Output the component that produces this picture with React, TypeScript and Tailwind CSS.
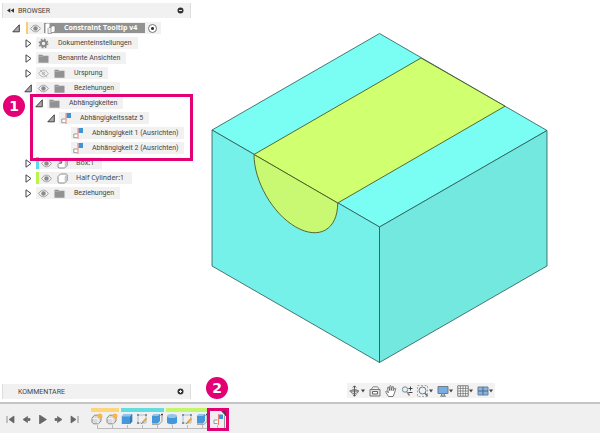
import type { ReactNode } from "react";
import clsx from "clsx";

type TreeRow = {
  label: string;
  indent: string;
  arrow?: "open" | "closed";
  icons: ReactNode;
  wide?: boolean;
  pill?: string;
};

const Eye = ({ off = false }: { off?: boolean }) => (
  <svg className="h-[9px] w-[11px] shrink-0" viewBox="0 0 11 9" fill="none">
    <path
      d="M.6 4.500C2.400 1.900 4 1.200 5.500 1.200S8.600 1.900 10.400 4.500C8.600 7.100 7 7.800 5.500 7.800S2.400 7.100.6 4.500Z"
      stroke={off ? "#b5b5b5" : "#a0a0a0"}
    />
    <circle
      cx="5.500"
      cy="4.500"
      r={off ? 1.3 : 2.2}
      fill={off ? "none" : "#8a8a8a"}
      stroke={off ? "#b5b5b5" : "none"}
    />
    {off && <path d="M2 .8 9 8.200" stroke="#b5b5b5" />}
  </svg>
);

const Folder = () => (
  <svg className="h-[9px] w-[11px] shrink-0" viewBox="0 0 11 9">
    <path d="M.5 .8H4.300L5 1.800H10.500V8.700H.5Z" fill="#929292" />
    <path d="M.5 2.500H5L5.800 1.800" stroke="#b9b9b9" strokeWidth=".6" fill="none" />
  </svg>
);

const Gear = () => (
  <svg className="h-[11px] w-[11px] shrink-0" viewBox="0 0 11 11" fill="none">
    <circle cx="5.500" cy="5.500" r="2.700" stroke="#8a8a8a" strokeWidth="2" />
    <circle
      cx="5.500"
      cy="5.500"
      r="4.200"
      stroke="#8a8a8a"
      strokeWidth="1.500"
      strokeDasharray="1.650 1.650"
    />
  </svg>
);

const Cube = ({ linked = false }: { linked?: boolean }) => (
  <svg className="h-[11px] w-[11px] shrink-0" viewBox="0 0 11 11" fill="none">
    <path d="M1 3.500 3.500 1H9.300L10.200 1.800V7.500L7.700 10H2L1 9.200Z" fill="#fff" stroke="#8b8b8b" />
    <path d="M7.700 10V3.500L10 1.300V7.500Z" fill="#c4c8cc" />
    {linked && (
      <>
        <path d="M0 0H6V3.500L3 6H0Z" fill="#f1f1f1" />
        <path d="M1 1.500 4.500 5M4.700 2V5.200H1.500" stroke="#666" />
      </>
    )}
  </svg>
);

// small square joined to a blue square along a red axis
const Joint = () => (
  <svg className="h-[11px] w-[10px] shrink-0" viewBox="0 0 10 11" fill="none">
    <rect x="5.500" y="0" width="4.500" height="5" fill="#3d95d6" />
    <path d="M4.500 6H.8V9.700H4.500" fill="#fff" stroke="#999" />
    <path d="M5 0V11" stroke="#ef7f7f" />
  </svg>
);

const Components = () => (
  <svg className="h-[11px] w-[12px] shrink-0" viewBox="0 0 12 11">
    <path d="M1.500 1.500 2.500 .5H5.500V10H1.500Z" fill="#fff" />
    <path d="M4 5.500 5 4.500H7.500V10.500H4Z" fill="#eee" stroke="#777" strokeWidth=".6" />
    <path d="M7 4 8.500 3H11V8L10 9.500H7Z" fill="#fff" stroke="#777" strokeWidth=".6" />
  </svg>
);

const eyeFolder = (
  <span className="flex gap-[5px]">
    <Eye />
    <Folder />
  </span>
);

const topRows: TreeRow[] = [
  { label: "Dokumenteinstellungen", indent: "pl-6", arrow: "closed", icons: <Gear /> },
  { label: "Benannte Ansichten", indent: "pl-6", arrow: "closed", icons: <Folder /> },
  {
    label: "Ursprung",
    indent: "pl-6",
    arrow: "closed",
    icons: (
      <span className="flex gap-[5px]">
        <Eye off />
        <Folder />
      </span>
    ),
  },
  { label: "Beziehungen", indent: "pl-6", arrow: "open", icons: eyeFolder },
];

const constraintRows: TreeRow[] = [
  { label: "Abhängigkeiten", indent: "pl-[35px]", arrow: "open", icons: <Folder /> },
  { label: "Abhängigkeitssatz 5", indent: "pl-[47px]", arrow: "open", icons: <Joint /> },
  { label: "Abhängigkeit 1 (Ausrichten)", indent: "pl-[59px]", icons: <Joint /> },
  { label: "Abhängigkeit 2 (Ausrichten)", indent: "pl-[59px]", icons: <Joint /> },
];

const bodyRows: TreeRow[] = [
  {
    label: "Box:1",
    indent: "pl-6",
    arrow: "closed",
    wide: true,
    pill: "border-l-3 border-[#5edbe2]",
    icons: (
      <span className="flex items-center gap-[5px]">
        <Eye />
        <Cube linked />
      </span>
    ),
  },
  {
    label: "Half Cylinder:1",
    indent: "pl-6",
    arrow: "closed",
    wide: true,
    pill: "border-l-3 border-[#bdf24c]",
    icons: (
      <span className="flex items-center gap-[5px]">
        <Eye />
        <Cube />
      </span>
    ),
  },
  { label: "Beziehungen", indent: "pl-6", arrow: "closed", icons: eyeFolder },
];

export default function App() {
  return (
    <div className="flex min-h-screen flex-col bg-white font-['Roboto',sans-serif] text-[7px] leading-[12px] text-[#444]">
      <main className="flex flex-1">
        <Sidebar />
        <section className="flex flex-1 flex-col pt-8 pb-1">
          <Model />
          <ViewToolbar />
        </section>
      </main>
      <Timeline />
    </div>
  );
}

function Sidebar() {
  return (
    <aside className="flex w-[191px] shrink-0 flex-col pt-[3px] pb-[3px] pl-[2px]">
      <PanelHeader title="BROWSER" collapsible />
      <ul className="mt-1 flex flex-col gap-[3px]">
        <li className="flex items-center pl-3">
          <Arrow state="open" />
          <div className="flex h-3 items-center border-l-2 border-[#f8cf70] bg-[#f1f1f1] pr-1 pl-[2px]">
            <Eye />
            <span className="ml-[3px] flex h-[10px] items-center gap-2 bg-[#929292] pr-2 font-['Open_Sans',sans-serif] font-bold text-white">
              <Components />
              Constraint Tooltip v4
            </span>
            <input
              type="radio"
              aria-label="Constraint Tooltip v4"
              defaultChecked
              className="ml-[3px] size-[9px] appearance-none rounded-full border border-[#777] bg-[radial-gradient(circle,#333_1px,#fff_2px)]"
            />
          </div>
        </li>
        {topRows.map((row) => (
          <Row key={row.label} {...row} />
        ))}
        <li className="relative">
          <ul className="flex flex-col gap-[3px]">
            {constraintRows.map((row) => (
              <Row key={row.label} {...row} />
            ))}
          </ul>
          <div className="pointer-events-none absolute -top-[3px] -right-[2px] -bottom-[7px] left-[28px] z-10 border-3 border-[#e20074]" />
          <Callout className="-top-[2px] left-[1px]">1</Callout>
        </li>
        {bodyRows.map((row) => (
          <Row key={row.label} {...row} />
        ))}
      </ul>
      <div className="mt-auto">
        <PanelHeader title="KOMMENTARE" />
      </div>
    </aside>
  );
}

function PanelHeader({ title, collapsible }: { title: string; collapsible?: boolean }) {
  return (
    <div className="flex h-[15px] items-center border-x border-[#ddd] bg-[#f1f1f1] pr-[6px]">
      <span className="flex w-[15px] justify-center">
        {collapsible && (
          <button type="button" aria-label="Einklappen">
            <svg className="h-[5px] w-[7px]" viewBox="0 0 7 5" fill="#333">
              <path d="M3.300 .3V4.700L0 2.500ZM7 .3V4.700L3.700 2.500Z" />
            </svg>
          </button>
        )}
      </span>
      <h2 className="flex-1">{title}</h2>
      <button type="button" aria-label={collapsible ? "Ausblenden" : "Hinzufügen"}>
        <svg className="size-[7px]" viewBox="0 0 7 7">
          <circle cx="3.500" cy="3.500" r="3" fill="#333" />
          <path d={collapsible ? "M2 3.500H5" : "M2 3.500H5M3.500 2V5"} stroke="#eee" />
        </svg>
      </button>
    </div>
  );
}

function Row({ label, indent, arrow, icons, wide, pill }: TreeRow) {
  return (
    <li className={clsx("flex items-center", indent)}>
      <Arrow state={arrow} shift />
      <div
        className={clsx(
          "flex h-3 items-center bg-[#f1f1f1] pl-[2px] whitespace-nowrap",
          wide ? "gap-2 pr-2 font-['Noto_Sans',sans-serif]" : "gap-[9px] pr-[6px]",
          pill
        )}
      >
        {icons}
        <span>{label}</span>
      </div>
    </li>
  );
}

function Arrow({ state, shift }: { state?: "open" | "closed"; shift?: boolean }) {
  if (!state) return <span className="w-[10px] shrink-0" />;
  return (
    <button
      type="button"
      aria-label={state === "open" ? "Zuklappen" : "Aufklappen"}
      className={clsx("-ml-[2px] h-[10px] shrink-0", shift ? "w-3" : "w-[14px]")}
    >
      {state === "open" ? (
        <svg className="h-[9px] w-2" viewBox="0 0 8 9">
          <path d="M7.300 .8V7.800H.8Z" fill="#aaa" stroke="#333" strokeWidth=".9" />
        </svg>
      ) : (
        <svg className="ml-[1px] h-[9px] w-[7px]" viewBox="0 0 7 9">
          <path d="M1 .8 6 4.500 1 8.200Z" fill="#fff" stroke="#444" />
        </svg>
      )}
    </button>
  );
}

function Callout({ className, children }: { className: string; children: ReactNode }) {
  return (
    <span
      className={clsx(
        "absolute z-10 flex size-[22px] items-center justify-center rounded-full bg-[#e20074] font-['DejaVu_Sans',sans-serif] text-[14px] font-bold text-white",
        className
      )}
    >
      {children}
    </span>
  );
}

function Model() {
  return (
    <div className="flex flex-1 items-start justify-center pr-8">
      <svg className="h-[332px] w-[337px]" viewBox="211 32 337 332" strokeLinejoin="round">
        <g stroke="#2c5553" strokeWidth=".8">
          <path d="M379.500 33.500 547 130.500 379.500 227 212 130Z" fill="#7afdf3" />
          <path d="M212 130 379.500 227V362.500L212 266Z" fill="#76f1e9" />
          <path d="M379.500 227 547 130.500V266L379.500 362.500Z" fill="#72e8de" />
        </g>
        <g stroke="#4a5a24" strokeWidth=".9">
          <path d="M254 154.500 421 58 505 106.200 337.700 203Z" fill="#d0ff70" />
          <path
            d="M254 154.500C254 181.200 272.600 213.700 295.800 227S337.700 229.700 337.700 203Z"
            fill="#c9f872"
          />
        </g>
      </svg>
    </div>
  );
}

const Caret = () => (
  <svg className="h-[4px] w-[4px]" viewBox="0 0 4 4">
    <path d="M0 .5H4L2 3.500Z" fill="#444" />
  </svg>
);

const tools: { name: string; menu?: boolean; drawing: ReactNode }[] = [
  {
    name: "Orbit",
    menu: true,
    drawing: (
      <>
        <path d="M5.500 1V11M.5 6H10" stroke="#555" />
        <path d="M3.800 2.500 5.500 .8 7.200 2.500M3.800 9.500 5.500 11.200 7.200 9.500" stroke="#555" />
        <ellipse cx="5.500" cy="6.500" rx="3.800" ry="2" stroke="#777" />
      </>
    ),
  },
  {
    name: "Ausrichten nach",
    drawing: (
      <>
        <path d="M1 4.500H11V11H1Z" fill="#e4e4e4" stroke="#777" />
        <path d="M3.500 6.500H8.500V9H3.500Z" fill="#fff" stroke="#666" />
        <path d="M2.500 4 4 1.800H8.500L10 4" stroke="#888" />
      </>
    ),
  },
  {
    name: "Pan",
    drawing: (
      <path
        d="M3.500 11.500 1 7.500C.3 6.200 1.500 5.500 2.300 6.500L3.300 7.800 2.600 3C2.500 1.800 3.700 1.600 4 2.700L4.700 5.500V1.500C4.700.4 6 .4 6.100 1.500L6.300 5.400 7.200 2C7.500 1 8.600 1.300 8.500 2.300L8.100 5.700 9.500 3.500C10.100 2.700 11 3.200 10.700 4.100L9.300 8.500 8 11.500Z"
        fill="#fff"
        stroke="#555"
        strokeWidth=".8"
      />
    ),
  },
  {
    name: "Zoom",
    drawing: (
      <>
        <circle cx="4" cy="4.500" r="2.700" fill="#e0f1fa" stroke="#7f8b93" />
        <path d="M6 6.800 8.500 10.500" stroke="#8f8579" strokeWidth="1.500" />
        <path d="M7.500 3.500H11.500M9.500 1.500V5.500M7.500 7.500H11.500" stroke="#444" />
      </>
    ),
  },
  {
    name: "Zoomfenster",
    menu: true,
    drawing: (
      <>
        <path d="M.5 .5H10.500V11.500H.5Z" stroke="#aaa" strokeDasharray="2 1.500" />
        <circle cx="5.500" cy="5.500" r="3.500" fill="#e8f4fa" stroke="#777" />
        <path d="M8 8.300 10.500 11" stroke="#6d655c" strokeWidth="1.500" />
      </>
    ),
  },
  {
    name: "Anzeige",
    menu: true,
    drawing: (
      <>
        <path d="M1 1.500H11V8.500H1Z" fill="#75aee5" stroke="#737b84" />
        <path d="M4.500 9H7.500V11H4.500ZM3 11.200H9" stroke="#888" />
      </>
    ),
  },
  {
    name: "Raster",
    menu: true,
    drawing: (
      <>
        <path d="M.8 .8H11.200V11.200H.8Z" fill="#fff" stroke="#777" />
        <path
          d="M3.400.8V11.200M6 .8V11.200M8.600.8V11.200M.8 3.400H11.200M.8 6H11.200M.8 8.600H11.200"
          stroke="#777"
          strokeWidth=".8"
        />
      </>
    ),
  },
  {
    name: "Ansichtsfenster",
    menu: true,
    drawing: (
      <>
        <path d="M1 2H11V10H1Z" fill="#86b5e4" stroke="#687e99" />
        <path d="M6 2V10M1 6H11" stroke="#52677f" />
      </>
    ),
  },
];

function ViewToolbar() {
  return (
    <div className="flex justify-center pl-[50px]">
      <div className="flex h-[15px] items-center gap-1 bg-[#f2f2f2] px-[2px]">
        {tools.map((tool) => (
          <button
            key={tool.name}
            type="button"
            aria-label={tool.name}
            className="flex items-center"
          >
            <svg className="size-3" viewBox="0 0 12 12" fill="none">
              {tool.drawing}
            </svg>
            {tool.menu && <Caret />}
          </button>
        ))}
      </div>
    </div>
  );
}

const players = [
  { name: "Zum Anfang", d: "M1 1V8M8 1V8L3 4.500Z" },
  { name: "Schritt zurück", d: "M5.500 1.500V7.500L1 4.500ZM6 3.500H8V5.500H6Z" },
  { name: "Wiedergabe", d: "M1.500 0 8.500 4.500 1.500 9Z" },
  { name: "Schritt vor", d: "M3.500 1.500V7.500L8 4.500ZM1 3.500H3V5.500H1Z" },
  { name: "Zum Ende", d: "M8 1V8M1 1V8L6 4.500Z" },
];

const NewPart = () => (
  <>
    <path d="M1 5 3.500 2.200H10V8L7.500 10.800H2.500L1 9.300Z" fill="#d9dbdd" stroke="#8c8c8c" />
    <path d="M1.500 5.500H7V10.500" stroke="#f4f4f4" />
    <circle cx="9" cy="3" r="2.200" fill="#ffa51e" />
    <path d="M9 0V6M6 3H12" stroke="#ffc45c" strokeWidth=".8" />
  </>
);

const Sketch = () => (
  <>
    <path d="M2 2H10V10H2Z" stroke="#a9bccb" />
    <path d="M1 1H3V3H1ZM9 1H11V3H9ZM1 9H3V11H1Z" fill="#7894ab" />
    <path d="M6.500 9.500 10.500 5.500" stroke="#e9a33b" strokeWidth="1.800" />
    <path d="M5.500 10.700 6.700 9.500" stroke="#555" />
  </>
);

const Extrude = () => (
  <>
    <path d="M1 3 3 1H9V8L7 10.500H1Z" fill="#4697d9" />
    <path d="M1 3 3 1H9L7 3Z" fill="#8fc5ee" />
    <path d="M1 11.300H8L11 8.500V1" stroke="#999" />
    <path d="M9.800 2.500 11 .8 12 2.500" stroke="#444" />
  </>
);

const Solid = () => (
  <>
    <path d="M.8 3.500 3 1H11.200V8.500L9 11H.8Z" fill="#4697d9" />
    <path d="M.8 3.500 3 1H11.200L9 3.500Z" fill="#8fc5ee" />
    <path d="M9 3.500 11.200 1V8.500L9 11Z" fill="#327db9" />
  </>
);

const Cylinder = () => (
  <>
    <path d="M1 3V9.500C1 11.800 11 11.800 11 9.500V3Z" fill="#4697d9" />
    <ellipse cx="6" cy="3" rx="5" ry="2" fill="#8fc5ee" />
  </>
);

const Align = () => (
  <>
    <path d="M8 1.500H12V6H8Z" fill="#3d95d6" />
    <path d="M6.500 7H3V10.500H6.500" fill="#fff" stroke="#999" />
    <path d="M7.500 1V12" stroke="#ef7f7f" />
  </>
);

const groups: { bar: string; steps: { name: string; drawing: ReactNode }[] }[] = [
  {
    bar: "bg-[#fdd67c]",
    steps: [
      { name: "Komponente 1", drawing: <NewPart /> },
      { name: "Komponente 2", drawing: <NewPart /> },
    ],
  },
  {
    bar: "bg-[#64dde0]",
    steps: [
      { name: "Box", drawing: <Solid /> },
      { name: "Skizze 1", drawing: <Sketch /> },
      { name: "Extrusion 1", drawing: <Extrude /> },
    ],
  },
  {
    bar: "bg-[#c2f76c]",
    steps: [
      { name: "Zylinder", drawing: <Cylinder /> },
      { name: "Skizze 2", drawing: <Sketch /> },
      { name: "Extrusion 2", drawing: <Extrude /> },
    ],
  },
  { bar: "bg-transparent", steps: [{ name: "Ausrichten", drawing: <Align /> }] },
];

function Timeline() {
  return (
    <footer className="flex h-[31px] items-start border-t-2 border-[#c4c4c4] bg-[#f0f0f0] pl-[6px]">
      <div className="flex w-[85px] gap-[7px] pt-[11px]">
        {players.map((player) => (
          <button key={player.name} type="button" aria-label={player.name}>
            <svg className="size-[9px]" viewBox="0 0 9 9" fill="#666" stroke="#666">
              <path d={player.d} strokeWidth=".7" />
            </svg>
          </button>
        ))}
      </div>
      <div className="relative flex pt-1">
        {groups.map((group) => (
          <div key={group.bar}>
            <div className={clsx("mr-[2px] h-1", group.bar)} />
            <div className="flex">
              {group.steps.map((step, i) => (
                <button
                  key={step.name}
                  type="button"
                  aria-label={step.name}
                  className="flex w-[15px] flex-col items-start pt-[1px]"
                >
                  <svg className="size-3" viewBox="0 0 12 12" fill="none">
                    {step.drawing}
                  </svg>
                  <span
                    className={clsx(
                      "ml-[6px] h-1 border-l border-[#bbb]",
                      group.steps.length === 1 && i === 0 ? "w-[1px]" : "w-[15px] border-b"
                    )}
                  />
                </button>
              ))}
            </div>
          </div>
        ))}
        <div className="absolute top-[4px] -right-[3px] h-[23px] w-[22px] border-3 border-[#e20074]">
          <svg className="absolute top-0 right-0 h-[17px] w-[6px]" viewBox="0 0 6 17">
            <path d="M1 0H6V5H5L4 3Z" fill="#444" />
            <path d="M4.500 5V17" stroke="#999" />
          </svg>
        </div>
        <Callout className="-top-[27px] -right-[2px]">2</Callout>
      </div>
    </footer>
  );
}
